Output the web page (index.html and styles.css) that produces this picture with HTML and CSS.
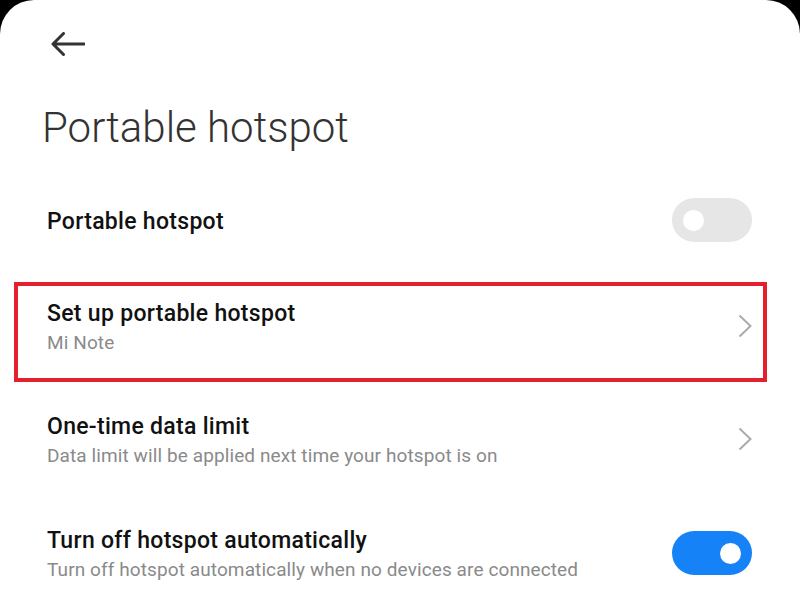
FILE: index.html
```html
<!DOCTYPE html>
<html lang="en">
<head>
<meta charset="utf-8">
<title>Portable hotspot</title>
<link rel="stylesheet" href="styles.css">
</head>
<body>
<div class="screen">
  <div class="topbar">
    <svg class="back" width="34" height="24" viewBox="0 0 34 24" aria-label="Back">
      <path d="M2 12H33M12.5 1.5L2 12L12.5 22.5" fill="none" stroke="#333" stroke-width="3" stroke-linecap="round" stroke-linejoin="round"/>
    </svg>
  </div>
  <h1 class="page-title">Portable hotspot</h1>
  <div class="list">
    <div class="row row-single">
      <div class="row-text"><div class="row-title">Portable hotspot</div></div>
      <div class="switch"><span class="knob"></span></div>
    </div>
    <div class="row row-highlight">
      <div class="row-text">
        <div class="row-title">Set up portable hotspot</div>
        <div class="row-sub">Mi Note</div>
      </div>
      <svg class="chev" width="14" height="24" viewBox="0 0 14 24"><path d="M1.5 1.5L12.5 12L1.5 22.5" fill="none" stroke="#ababab" stroke-width="2"/></svg>
    </div>
    <div class="row row-double row-nav">
      <div class="row-text">
        <div class="row-title">One-time data limit</div>
        <div class="row-sub">Data limit will be applied next time your hotspot is on</div>
      </div>
      <svg class="chev" width="14" height="24" viewBox="0 0 14 24"><path d="M1.5 1.5L12.5 12L1.5 22.5" fill="none" stroke="#ababab" stroke-width="2"/></svg>
    </div>
    <div class="row row-double">
      <div class="row-text">
        <div class="row-title">Turn off hotspot automatically</div>
        <div class="row-sub">Turn off hotspot automatically when no devices are connected</div>
      </div>
      <div class="switch switch-on"><span class="knob"></span></div>
    </div>
  </div>
</div>
</body>
</html>
```

FILE: styles.css
```css
html, body {
  margin: 0;
  padding: 0;
  background: #000;
}
.screen {
  width: 800px;
  height: 600px;
  background: #fff;
  border-radius: 34px 34px 0 0;
  overflow: hidden;
  font-family: Roboto, "Liberation Sans", sans-serif;
}
.topbar {
  display: flex;
  padding: 32px 0 0 51px;
  height: 24px;
}
.back {
  display: block;
}
.page-title {
  margin: 47px 0 0 42px;
  font-weight: 300;
  font-size: 42px;
  line-height: 50px;
  color: #333;
}
.list {
  margin-top: 45px;
}
.row {
  display: flex;
  align-items: center;
  justify-content: space-between;
  padding: 0 48px 0 47px;
}
.row-single {
  min-height: 44px;
}
.row-text {
  padding-top: 3px;
}
.row-title {
  font-weight: 500;
  font-size: 23px;
  line-height: 31px;
  letter-spacing: 0.3px;
  color: #111;
}
.row-sub {
  font-size: 19px;
  line-height: 28px;
  letter-spacing: 0.1px;
  color: #8a8a8a;
}
.row-highlight {
  margin: 40px 33px 0 14px;
  height: 100px;
  box-sizing: border-box;
  border: 4px solid #e5202d;
  padding: 0 11px 13px 29px;
}
.row-double {
  height: 114px;
}
.row-nav {
  padding-right: 48px;
}
.chev {
  display: block;
}
.switch {
  width: 80px;
  height: 44px;
  border-radius: 22px;
  background: #e6e6e6;
  display: flex;
  align-items: center;
  padding: 0 11px;
  box-sizing: border-box;
  flex-shrink: 0;
}
.switch-on {
  background: #1682f8;
  justify-content: flex-end;
}
.knob {
  width: 21px;
  height: 21px;
  border-radius: 50%;
  background: #fff;
}
```
